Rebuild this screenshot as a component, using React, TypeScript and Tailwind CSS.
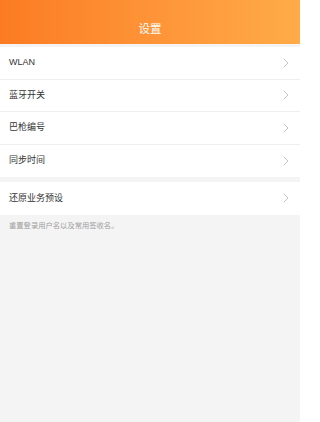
import React from "react";

const Chevron = () => (
  <svg width="6" height="10" viewBox="0 0 6 10" fill="none" className="shrink-0">
    <path d="M1 1l4 4-4 4" stroke="#c4c4c4" strokeWidth="1" strokeLinecap="round" strokeLinejoin="round" />
  </svg>
);

const Row = ({ label, border }: { label: string; border?: boolean }) => (
  <div className={`flex h-[32.5px] items-center justify-between bg-white pl-[9px] pr-[11px] ${border ? "border-b border-[#eeeeee]" : ""}`}>
    <span className="text-[9px] leading-none text-[#333333]">{label}</span>
    <Chevron />
  </div>
);

export default function App() {
  return (
    <div
      className="flex h-[422px] w-[300px] flex-col bg-[#f4f4f4]"
      style={{ fontFamily: '"Liberation Sans", "Noto Sans CJK SC", sans-serif' }}
    >
      <div className="flex h-[44px] items-start justify-center bg-gradient-to-r from-[#fb7b22] to-[#ffab48] pt-[22px]">
        <span className="text-[11.5px] leading-[14px] text-white">设置</span>
      </div>
      <div className="mt-[3px]">
        <Row label="WLAN" border />
        <Row label="蓝牙开关" border />
        <Row label="巴枪编号" border />
        <Row label="同步时间" />
      </div>
      <div className="mt-[5px]">
        <Row label="还原业务预设" />
      </div>
      <div className="pl-[9px] pt-[6px] text-[7.3px] leading-[10px] text-[#a0a0a0]">
        重置登录用户名以及常用签收名。
      </div>
    </div>
  );
}
